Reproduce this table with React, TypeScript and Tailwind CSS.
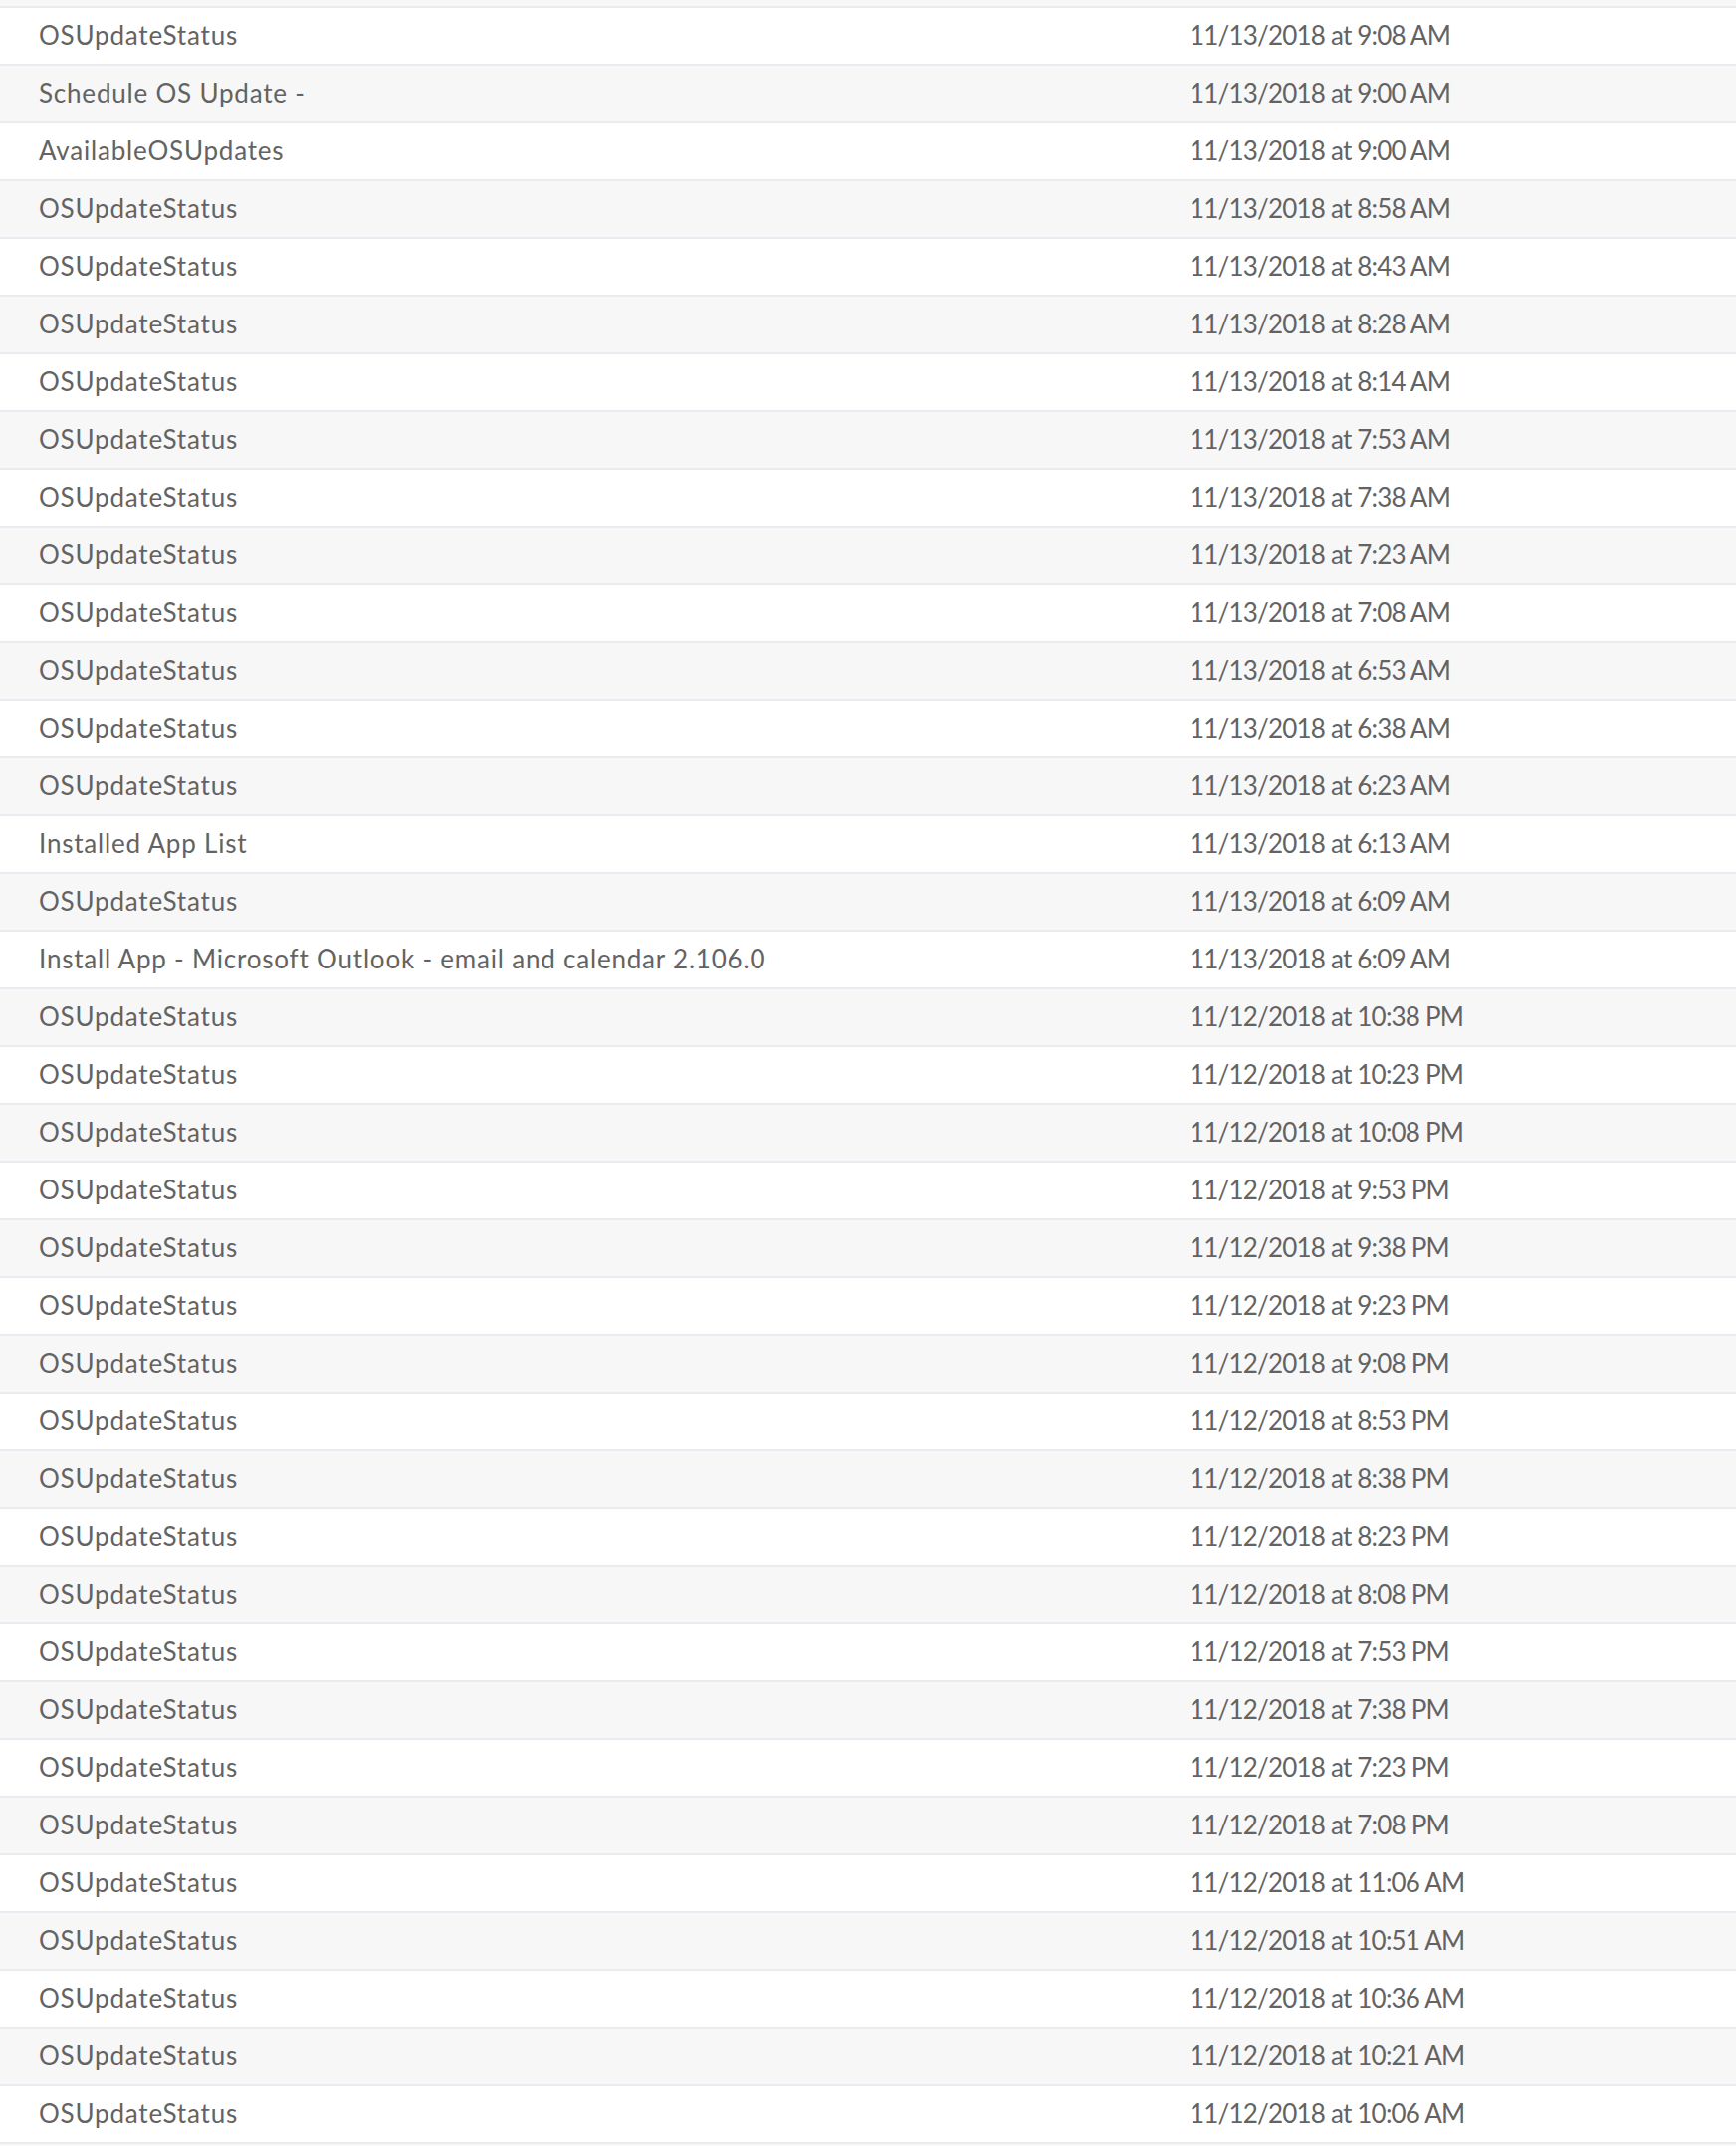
const rows: [string, string][] = [
  ["OSUpdateStatus", "11/13/2018 at 9:08 AM"],
  ["Schedule OS Update -", "11/13/2018 at 9:00 AM"],
  ["AvailableOSUpdates", "11/13/2018 at 9:00 AM"],
  ["OSUpdateStatus", "11/13/2018 at 8:58 AM"],
  ["OSUpdateStatus", "11/13/2018 at 8:43 AM"],
  ["OSUpdateStatus", "11/13/2018 at 8:28 AM"],
  ["OSUpdateStatus", "11/13/2018 at 8:14 AM"],
  ["OSUpdateStatus", "11/13/2018 at 7:53 AM"],
  ["OSUpdateStatus", "11/13/2018 at 7:38 AM"],
  ["OSUpdateStatus", "11/13/2018 at 7:23 AM"],
  ["OSUpdateStatus", "11/13/2018 at 7:08 AM"],
  ["OSUpdateStatus", "11/13/2018 at 6:53 AM"],
  ["OSUpdateStatus", "11/13/2018 at 6:38 AM"],
  ["OSUpdateStatus", "11/13/2018 at 6:23 AM"],
  ["Installed App List", "11/13/2018 at 6:13 AM"],
  ["OSUpdateStatus", "11/13/2018 at 6:09 AM"],
  ["Install App - Microsoft Outlook - email and calendar 2.106.0", "11/13/2018 at 6:09 AM"],
  ["OSUpdateStatus", "11/12/2018 at 10:38 PM"],
  ["OSUpdateStatus", "11/12/2018 at 10:23 PM"],
  ["OSUpdateStatus", "11/12/2018 at 10:08 PM"],
  ["OSUpdateStatus", "11/12/2018 at 9:53 PM"],
  ["OSUpdateStatus", "11/12/2018 at 9:38 PM"],
  ["OSUpdateStatus", "11/12/2018 at 9:23 PM"],
  ["OSUpdateStatus", "11/12/2018 at 9:08 PM"],
  ["OSUpdateStatus", "11/12/2018 at 8:53 PM"],
  ["OSUpdateStatus", "11/12/2018 at 8:38 PM"],
  ["OSUpdateStatus", "11/12/2018 at 8:23 PM"],
  ["OSUpdateStatus", "11/12/2018 at 8:08 PM"],
  ["OSUpdateStatus", "11/12/2018 at 7:53 PM"],
  ["OSUpdateStatus", "11/12/2018 at 7:38 PM"],
  ["OSUpdateStatus", "11/12/2018 at 7:23 PM"],
  ["OSUpdateStatus", "11/12/2018 at 7:08 PM"],
  ["OSUpdateStatus", "11/12/2018 at 11:06 AM"],
  ["OSUpdateStatus", "11/12/2018 at 10:51 AM"],
  ["OSUpdateStatus", "11/12/2018 at 10:36 AM"],
  ["OSUpdateStatus", "11/12/2018 at 10:21 AM"],
  ["OSUpdateStatus", "11/12/2018 at 10:06 AM"],
];

export default function App() {
  return (
    <div className="h-[2156px] overflow-hidden bg-white font-['Lato',sans-serif] text-[26px] text-[#636363]">
      {/* previous row, cut off by the scroll */}
      <div className="h-[8px] border-b-2 border-[#e8ebf0] bg-[#f7f7f7]" />
      {rows.map(([command, date], i) => (
        <div
          key={i}
          className={`flex h-[58px] items-center border-b-2 border-[#e8ebf0] pb-[2px] ${
            i % 2 === 1 ? "bg-[#f7f7f7]" : "bg-white"
          }`}
        >
          <div className="w-[1195px] shrink-0 pl-[39px] tracking-[0.8px]">{command}</div>
          <div className="tracking-[-0.8px]">{date}</div>
        </div>
      ))}
      <div className="h-[58px] bg-[#f7f7f7]" />
    </div>
  );
}
